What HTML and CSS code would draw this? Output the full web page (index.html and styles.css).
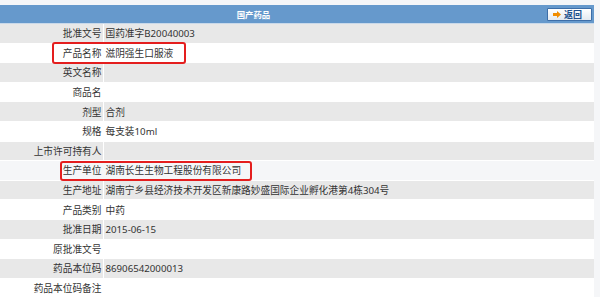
FILE: index.html
```html
<!DOCTYPE html>
<html>
<head>
<meta charset="utf-8">
<link rel="stylesheet" href="styles.css">
</head>
<body>
<div class="page">
  <div class="sheet">
    <div class="head">
      <div class="title">国产药品</div>
      <div class="tools">
        <button class="back">
          <svg class="arrow" width="8" height="7" viewBox="0 0 8 7"><path d="M0 2h4V0l4 3.5L4 7V5H0z" fill="#f08c00"/></svg>
          <span>返回</span>
        </button>
      </div>
    </div>
    <div class="rows">
      <div class="row alt"><div class="k">批准文号</div><div class="v">国药准字B20040003</div></div>
      <div class="row"><div class="k">产品名称</div><div class="v">滋阴强生口服液</div></div>
      <div class="row alt"><div class="k">英文名称</div><div class="v"></div></div>
      <div class="row"><div class="k">商品名</div><div class="v"></div></div>
      <div class="row alt"><div class="k">剂型</div><div class="v">合剂</div></div>
      <div class="row"><div class="k">规格</div><div class="v">每支装10ml</div></div>
      <div class="row alt"><div class="k">上市许可持有人</div><div class="v"></div></div>
      <div class="row hover"><div class="k">生产单位</div><div class="v">湖南长生生物工程股份有限公司</div></div>
      <div class="row alt"><div class="k">生产地址</div><div class="v">湖南宁乡县经济技术开发区新康路妙盛国际企业孵化港第4栋304号</div></div>
      <div class="row"><div class="k">产品类别</div><div class="v">中药</div></div>
      <div class="row alt"><div class="k">批准日期</div><div class="v">2015-06-15</div></div>
      <div class="row"><div class="k">原批准文号</div><div class="v"></div></div>
      <div class="row alt"><div class="k">药品本位码</div><div class="v">86906542000013</div></div>
      <div class="row"><div class="k">药品本位码备注</div><div class="v"></div></div>
    </div>
  </div>
  <div class="mark mark-1"></div>
  <div class="mark mark-2"></div>
</div>
</body>
</html>
```
FILE: styles.css
```css
html, body {
  margin: 0;
  padding: 0;
  background: #f5f6f8;
  overflow: hidden;
}
body {
  font-family: "Noto Sans", "Noto Sans CJK SC", sans-serif;
  font-size: 9.7px;
  color: #333;
}
.page {
  position: relative;
  width: 600px;
  height: 297px;
}
.sheet {
  width: 594px;
  padding-top: 5px;
}
.head {
  display: grid;
  grid-template-columns: 507px 1fr;
  height: 18px;
  background: #6699cc;
  border-bottom: 1px solid #c9d9ea;
}
.title {
  display: flex;
  align-items: center;
  justify-content: center;
  color: #fff;
  font-weight: bold;
  font-size: 8.4px;
}
.tools {
  display: flex;
  align-items: center;
  justify-content: flex-end;
  padding-right: 2px;
}
.back {
  display: flex;
  align-items: center;
  gap: 3px;
  width: 45px;
  height: 13px;
  margin: 0;
  padding: 0 0 0 5px;
  border: 1px solid #3d6ea8;
  border-radius: 1px;
  background: linear-gradient(#ffffff, #e4e9f0);
  font-family: "Noto Sans CJK SC", sans-serif;
  font-size: 9px;
  font-weight: bold;
  color: #21508c;
  line-height: 1;
  box-sizing: border-box;
}
.rows {
  display: flex;
  flex-direction: column;
  gap: 1px;
  background: #fff;
}
.row {
  display: grid;
  grid-template-columns: 102.5px 1fr;
  column-gap: 1.5px;
  height: 18.6px;
  background: #fff;
}
.row > div {
  display: flex;
  align-items: center;
  white-space: nowrap;
}
.row.alt > div { background: #e8e8e8; }
.row.hover > div { background: #f5f6f8; }
.row.hover { background: #f5f6f8; }
.k {
  justify-content: flex-end;
  padding-right: 1px;
}
.v {
  padding-left: 1.5px;
}
.mark {
  position: absolute;
  border: 2px solid #e41e1e;
  border-radius: 3px;
  box-sizing: border-box;
}
.mark-1 {
  left: 52px;
  top: 41.5px;
  width: 134px;
  height: 22px;
}
.mark-2 {
  left: 59.5px;
  top: 160.5px;
  width: 192px;
  height: 20.5px;
}
```
